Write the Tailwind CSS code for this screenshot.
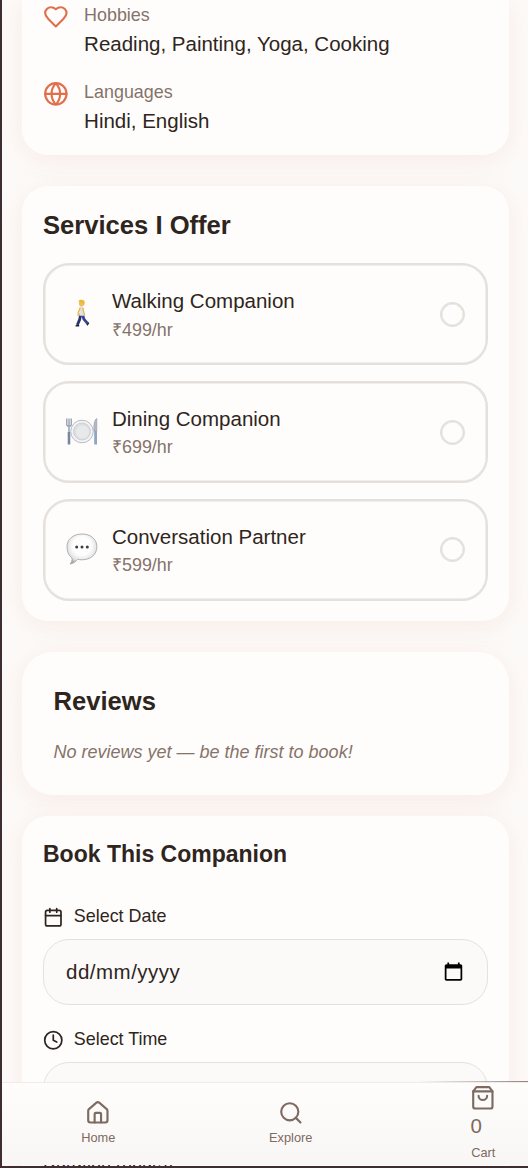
<!DOCTYPE html>
<html lang="en">
<head>
    <meta charset="UTF-8">
    <meta name="viewport" content="width=device-width, initial-scale=1.0">
    <title>Companion Profile</title>
    <script src="https://cdn.jsdelivr.net/npm/@tailwindcss/browser@4"></script>
    <style>
        body {
            font-family: 'Liberation Sans', Arial, sans-serif;
        }
        .card {
            background-color: #fffdfc;
            box-shadow: 0 5px 26px rgba(214, 112, 80, 0.1);
        }
    </style>
</head>
<body class="bg-[#fcfaf8] text-[#2e2520]">
    <div class="relative h-[1168px] w-[528px] overflow-hidden border-b-2 border-l-2 border-[#3f2d33] bg-[#fcfaf8] whitespace-nowrap">
        <main class="flex flex-col pr-[19px] pl-5">
            <!-- About -->
            <section class="card flex h-[155px] flex-col gap-[21px] rounded-b-[26px] px-[21px] pt-[2px]">
                <div class="flex gap-[15.4px]">
                    <svg class="mt-[2px] size-[25.7px] text-[#e0704b]" viewBox="0 0 24 24" fill="none" stroke="currentColor" stroke-width="2" stroke-linecap="round" stroke-linejoin="round"><path d="M19 14c1.49-1.46 3-3.21 3-5.5A5.5 5.5 0 0 0 16.5 3c-1.76 0-3 .5-4.5 2-1.5-1.5-2.74-2-4.5-2A5.5 5.5 0 0 0 2 8.5c0 2.3 1.5 4.05 3 5.5l7 7Z"/></svg>
                    <div>
                        <p class="text-[17.9px] leading-[27px] text-[#85736a]">Hobbies</p>
                        <p class="text-[20.5px] leading-[29px]">Reading, Painting, Yoga, Cooking</p>
                    </div>
                </div>
                <div class="flex gap-[15.4px]">
                    <svg class="mt-[2px] size-[25.7px] text-[#e0704b]" viewBox="0 0 24 24" fill="none" stroke="currentColor" stroke-width="2" stroke-linecap="round" stroke-linejoin="round"><circle cx="12" cy="12" r="10"/><path d="M12 2a14.5 14.5 0 0 0 0 20 14.5 14.5 0 0 0 0-20"/><path d="M2 12h20"/></svg>
                    <div>
                        <p class="text-[17.9px] leading-[27px] text-[#85736a]">Languages</p>
                        <p class="text-[20.5px] leading-[29px]">Hindi, English</p>
                    </div>
                </div>
            </section>

            <!-- Services -->
            <section class="card mt-[31px] h-[435px] rounded-[26px] px-[21px] pt-[21px]">
                <h2 class="text-[25.6px] leading-9 font-bold">Services I Offer</h2>
                <div class="mt-5 flex flex-col gap-[15.6px]">
                    <div class="flex h-[102.3px] items-center rounded-[26px] border-2 border-[#e5e0db] pr-[21px] pl-[20px] shadow-[inset_0_0_0_0.5px_#e5e0db]">
                        <svg class="h-9 w-[34px]" viewBox="0 0 34 36">
                            <g transform="translate(1 1.6) scale(.88)">
                                <path d="M17 18 15.5 25l-2.6 6.2" fill="none" stroke="#29336f" stroke-width="3.2"/>
                                <path d="m18.5 18 1.8 6.5 4.4 5" fill="none" stroke="#37438b" stroke-width="3.2"/>
                                <path d="M11 31.2h4v1.6h-4.2zM23.2 30.5l2.6-2.6.7 1.1-1.9 3z" fill="#1d2040"/>
                                <path d="M15.3 10.5c2-1.2 4.5-.5 5 1.5l.8 8.5h-6z" fill="#dfe4ea"/>
                                <path d="m16.2 11.5-2.5 6 .3 3.5M19 11.8l1.2 5 1 3.5" fill="none" stroke="#e8b642" stroke-width="1.5"/>
                                <ellipse cx="17.7" cy="6.5" rx="3" ry="3.6" fill="#f2bd5d"/>
                                <path d="M14 4.5c.5-2.7 7-3 7.200.6l-.5 3.400-1.700-2.500z" fill="#e9bb2d"/>
                            </g>
                        </svg>
                        <div class="ml-[13px] flex-1 pt-[1.4px]">
                            <p class="text-[20.5px] leading-[30.4px]">Walking Companion</p>
                            <p class="text-[17.9px] leading-[27px] text-[#85736a]">₹499/hr</p>
                        </div>
                        <span class="size-[25px] rounded-full border-2 border-[#e5e0db] shadow-[inset_0_0_0_0.5px_#e5e0db]"></span>
                    </div>
                    <div class="flex h-[102.3px] items-center rounded-[26px] border-2 border-[#e5e0db] pr-[21px] pl-[20px] shadow-[inset_0_0_0_0.5px_#e5e0db]">
                        <svg class="h-9 w-[34px]" viewBox="0 0 34 36">
                            <path d="M1.8 4.5v6c0 2.5 4.4 2.5 4.4 0v-6M4 4.5v8" fill="none" stroke="#8a939d" stroke-width="1.2"/>
                            <path d="M4 12v7" stroke="#9cb3cc" stroke-width="1.8"/>
                            <path d="M4 18v12.5" stroke="#78889c" stroke-width="2.6"/>
                            <circle cx="17" cy="17.5" r="11.3" fill="#f3f4f5" stroke="#b8bcc1" stroke-width="1"/>
                            <circle cx="17" cy="17.5" r="8.5" fill="#dcdee1" stroke="#c6c9ce" stroke-width=".8"/>
                            <circle cx="17.5" cy="18" r="6.5" fill="#e8e9eb"/>
                            <path d="M31.8 4.5c-2.5 1-3.3 7-2.8 12.5h2.8z" fill="#b4bac1" stroke="#929ba5" stroke-width=".6"/>
                            <path d="M30.6 17v13.5" stroke="#8fa6c2" stroke-width="2.8"/>
                        </svg>
                        <div class="ml-[13px] flex-1 pt-[1.4px]">
                            <p class="text-[20.5px] leading-[30.4px]">Dining Companion</p>
                            <p class="text-[17.9px] leading-[27px] text-[#85736a]">₹699/hr</p>
                        </div>
                        <span class="size-[25px] rounded-full border-2 border-[#e5e0db] shadow-[inset_0_0_0_0.5px_#e5e0db]"></span>
                    </div>
                    <div class="flex h-[102.3px] items-center rounded-[26px] border-2 border-[#e5e0db] pr-[21px] pl-[20px] shadow-[inset_0_0_0_0.5px_#e5e0db]">
                        <svg class="h-9 w-[34px]" viewBox="0 1.5 34 36">
                            <defs>
                                <radialGradient id="bubble" cx=".5" cy=".4" r=".62">
                                    <stop offset=".5" stop-color="#fdfdfd"/>
                                    <stop offset=".8" stop-color="#e2e2e2"/>
                                    <stop offset="1" stop-color="#a0a0a0"/>
                                </radialGradient>
                            </defs>
                            <path d="M17 3.5c8.7 0 14.9 5.2 14.9 12.8S25.7 29.3 17 29.3c-1.6 0-3-.2-4.3-.5-1.9 2.3-4.5 4.2-7.6 4.8 1.5-1.7 2.2-3.7 1.9-6.1C3.7 25 2 21.2 2 16.2 2 8.7 8.3 3.5 17 3.5Z" fill="url(#bubble)" stroke="#a0a0a0" stroke-width=".8"/>
                            <g fill="#3e3e3e"><circle cx="11.7" cy="16.6" r="1.5"/><circle cx="17" cy="16.6" r="1.5"/><circle cx="22.3" cy="16.6" r="1.5"/></g>
                        </svg>
                        <div class="ml-[13px] flex-1 pt-[1px]">
                            <p class="text-[20.5px] leading-[30.4px]">Conversation Partner</p>
                            <p class="text-[17.9px] leading-[26.4px] text-[#85736a]">₹599/hr</p>
                        </div>
                        <span class="size-[25px] rounded-full border-2 border-[#e5e0db] shadow-[inset_0_0_0_0.5px_#e5e0db]"></span>
                    </div>
                </div>
            </section>

            <!-- Reviews -->
            <section class="card mt-[31px] h-[143px] rounded-[31px] px-[31.5px] pt-[31px]">
                <h2 class="text-[25.6px] leading-9 font-bold">Reviews</h2>
                <p class="mt-[21px] text-[18px] leading-[25.7px] text-[#85736a] italic">No reviews yet — be the first to book!</p>
            </section>

            <!-- Booking -->
            <section class="card mt-[21px] h-[420px] rounded-[26px] px-[21px] pt-[21px]">
                <h3 class="text-[23px] leading-[35px] font-bold">Book This Companion</h3>
                <div class="mt-[31.5px] flex items-center gap-[10.3px]">
                    <svg class="mt-[2px] size-[20.57px]" viewBox="0 0 24 24" fill="none" stroke="currentColor" stroke-width="2" stroke-linecap="round" stroke-linejoin="round"><path d="M8 2v4M16 2v4"/><rect width="18" height="18" x="3" y="4" rx="2"/><path d="M3 10h18"/></svg>
                    <span class="text-[17.9px] leading-[25.7px]">Select Date</span>
                </div>
                <div class="mt-[9.8px] flex h-[66px] items-center justify-between rounded-[26px] border border-[#e4e2dc] bg-[#fbfaf9] pr-[23px] pl-[22px]">
                    <span class="text-[20.5px] tracking-[0.5px]">dd/mm/yyyy</span>
                    <svg class="size-[21px] text-black" viewBox="0 .5 24 24" fill="currentColor"><path d="M20 3h-1V1h-2v2H7V1H5v2H4c-1.100 0-2 .9-2 2v15c0 1.100.9 2 2 2h16c1.100 0 2-.9 2-2V5c0-1.100-.9-2-2-2zm0 17H4V8h16v12z"/></svg>
                </div>
                <div class="mt-[21.5px] flex items-center gap-[10.3px]">
                    <svg class="mt-[2px] size-[20.57px]" viewBox="0 0 24 24" fill="none" stroke="currentColor" stroke-width="2" stroke-linecap="round" stroke-linejoin="round"><circle cx="12" cy="12" r="10"/><path d="M12 6v6l4 2"/></svg>
                    <span class="text-[17.9px] leading-[25.7px]">Select Time</span>
                </div>
                <div class="mt-[9.8px] h-[66px] rounded-[26px] border border-[#e4e2dc] bg-[#fbfaf9]"></div>
                <p class="mt-[21.5px] text-[18px] leading-[25.7px]">Duration (hours)</p>
            </section>
        </main>

        <!-- Bottom navigation -->
        <nav class="absolute top-[1082px] left-0 grid h-[82.5px] w-full grid-cols-[192.5px_192.5px_192.5px] items-center border-t border-[#f3ebe7] bg-linear-to-b from-[#fffdfc] to-[#f8f7f6] text-[#7d6a61]">
            <div class="flex flex-col items-center gap-[3px] pb-[0.5px]">
                <svg class="size-[25.7px]" viewBox="0 0 24 24" fill="none" stroke="currentColor" stroke-width="2" stroke-linecap="round" stroke-linejoin="round"><path d="M15 21v-8a1 1 0 0 0-1-1h-4a1 1 0 0 0-1 1v8"/><path d="M3 10a2 2 0 0 1 .709-1.528l7-5.999a2 2 0 0 1 2.582 0l7 5.999A2 2 0 0 1 21 10v9a2 2 0 0 1-2 2H5a2 2 0 0 1-2-2z"/></svg>
                <span class="text-[12.8px] leading-[18px]">Home</span>
            </div>
            <div class="flex flex-col items-center gap-[3px] pb-[0.5px]">
                <svg class="size-[25.7px]" viewBox="0 0 24 24" fill="none" stroke="currentColor" stroke-width="2" stroke-linecap="round" stroke-linejoin="round"><circle cx="11" cy="11" r="8"/><path d="m21 21-4.3-4.3"/></svg>
                <span class="text-[12.8px] leading-[18px]">Explore</span>
            </div>
            <div class="flex flex-col items-center gap-[2.6px]">
                <div class="w-[25.7px]">
                    <svg class="size-[25.7px]" viewBox="0 0 24 24" fill="none" stroke="currentColor" stroke-width="2" stroke-linecap="round" stroke-linejoin="round"><path d="M6 2 3 6v14a2 2 0 0 0 2 2h14a2 2 0 0 0 2-2V6l-3-4Z"/><path d="M3 6h18"/><path d="M16 10a4 4 0 0 1-8 0"/></svg>
                    <span class="block text-[20.5px] leading-[30.8px]">0</span>
                </div>
                <span class="text-[12.8px] leading-[18px]">Cart</span>
            </div>
        </nav>
        <div class="absolute top-[1081px] right-0 h-px w-[110px] bg-linear-to-r from-transparent to-[#8f8583]"></div>
    </div>
</body>
</html>
